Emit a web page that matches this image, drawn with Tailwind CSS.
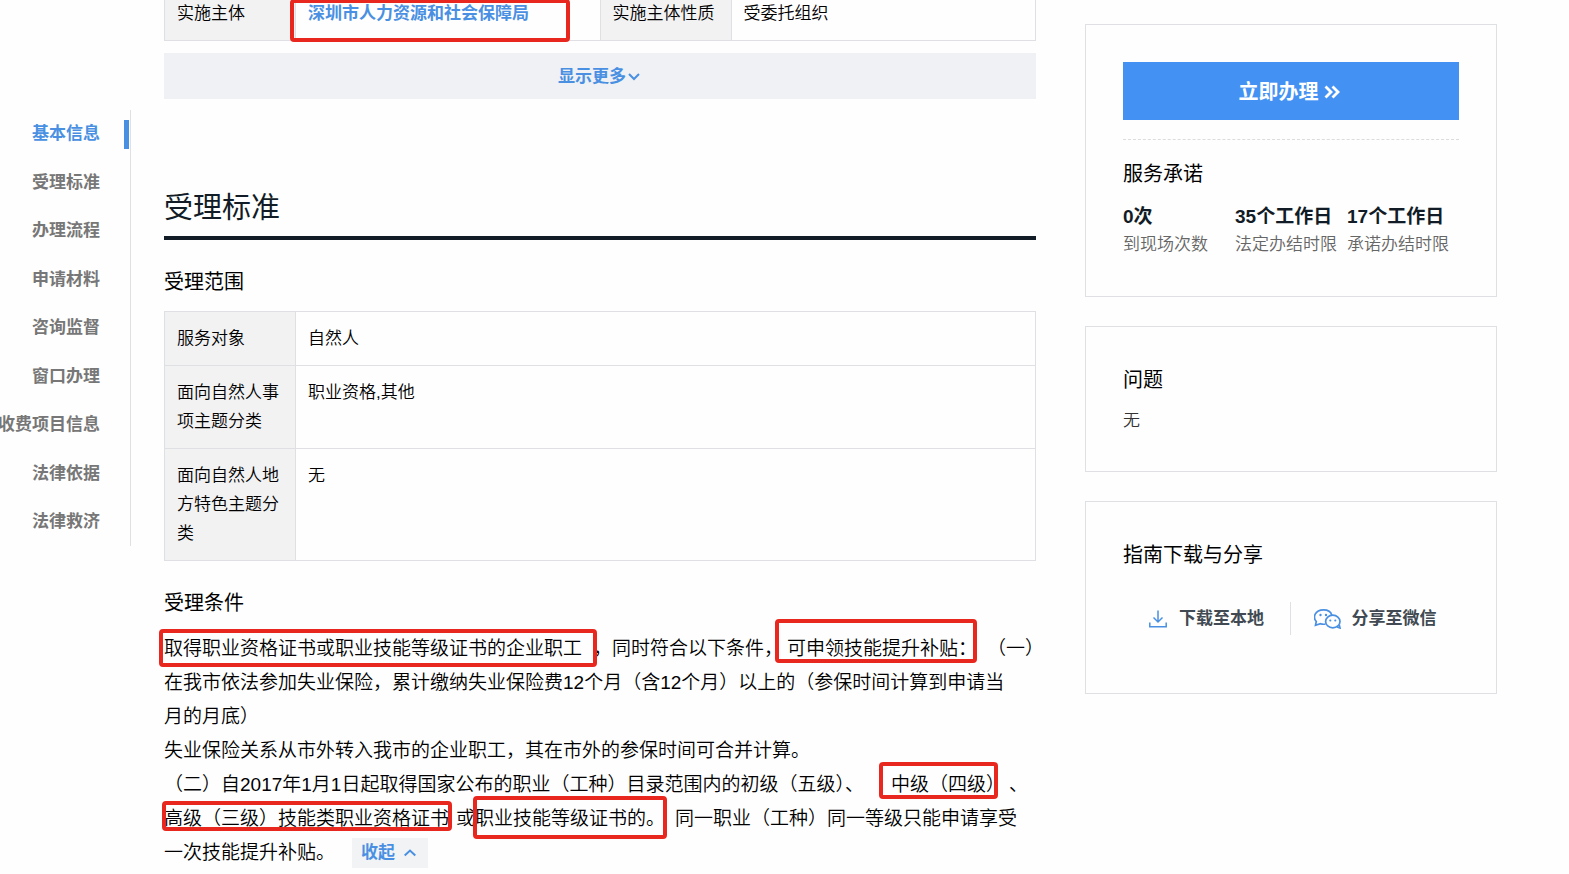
<!DOCTYPE html>
<html lang="zh-CN">
<head>
<meta charset="utf-8">
<meta name="viewport" content="width=device-width, initial-scale=1">
<title>受理标准</title>
<script src="https://cdn.jsdelivr.net/npm/@tailwindcss/browser@4"></script>
</head>
<body class="bg-[#fefefe] font-['Liberation_Sans','Noto_Sans_CJK_SC',sans-serif] text-[17px] text-black overflow-x-hidden">
<div class="flex items-start">

  <nav aria-label="页面目录" class="w-[131px] shrink-0 mt-[110px]">
    <ul class="flex flex-col h-[436px] border-r border-[#dfe0e3] font-bold text-[#777777] whitespace-nowrap">
      <li class="relative flex-1 flex items-center justify-end pr-[30px] text-[#4a90e2]"><a href="#basic">基本信息</a><span class="absolute right-px w-[5px] h-[29px] bg-[#4a90e2]"></span></li>
      <li class="flex-1 flex items-center justify-end pr-[30px]"><a href="#standard">受理标准</a></li>
      <li class="flex-1 flex items-center justify-end pr-[30px]"><a href="#process">办理流程</a></li>
      <li class="flex-1 flex items-center justify-end pr-[30px]"><a href="#materials">申请材料</a></li>
      <li class="flex-1 flex items-center justify-end pr-[30px]"><a href="#consult">咨询监督</a></li>
      <li class="flex-1 flex items-center justify-end pr-[30px]"><a href="#window">窗口办理</a></li>
      <li class="flex-1 flex items-center justify-end pr-[30px]"><a href="#fees">收费项目信息</a></li>
      <li class="flex-1 flex items-center justify-end pr-[30px]"><a href="#law">法律依据</a></li>
      <li class="flex-1 flex items-center justify-end pr-[30px]"><a href="#remedy">法律救济</a></li>
    </ul>
  </nav>

  <main class="flex-1 min-w-0 ml-[33px] mr-[49px]">
    <table id="basic" class="-mt-[14px] w-full table-fixed border-collapse text-left leading-[29px]">
      <tbody>
        <tr>
          <th scope="row" class="w-[131px] border border-[#dfe0e3] bg-[#f2f2f3] p-3 font-[350]">实施主体</th>
          <td class="border border-[#dfe0e3] p-3 font-bold text-[#4a90e2]"><span class="relative inline-block before:absolute before:-left-[18px] before:-right-[41px] before:top-0 before:-bottom-[14px] before:rounded-sm before:border-4 before:border-[#e8281e]"><a href="#agency">深圳市人力资源和社会保障局</a></span></td>
          <th scope="row" class="w-[131px] border border-[#dfe0e3] bg-[#f2f2f3] p-3 font-[350]">实施主体性质</th>
          <td class="border border-[#dfe0e3] p-3 font-[350]">受委托组织</td>
        </tr>
      </tbody>
    </table>
    <button type="button" class="mt-3 flex h-[46px] w-full items-center justify-center gap-[2px] bg-[#f0f1f4] pt-px pr-[2px] font-bold text-[#4a90e2]">显示更多
      <svg class="w-3 h-3" viewBox="0 0 12 12" fill="none" stroke="currentColor" stroke-width="2"><path d="M1 3 6 8l5-5"/></svg>
    </button>

    <h2 id="standard" class="mt-[87px] border-b-4 border-[#111c26] pb-[6px] text-[29px] leading-[44px] text-[#111c26]">受理标准</h2>

    <h3 class="mt-[27px] text-[20px] leading-[30px]">受理范围</h3>
    <table class="mt-[14px] w-full table-fixed border-collapse text-left align-top leading-[29px] font-[350]">
      <tbody>
        <tr>
          <th scope="row" class="w-[131px] border border-[#dfe0e3] bg-[#f2f2f3] p-3 align-top font-[350]">服务对象</th>
          <td class="border border-[#dfe0e3] p-3 align-top">自然人</td>
        </tr>
        <tr>
          <th scope="row" class="border border-[#dfe0e3] bg-[#f2f2f3] p-3 align-top font-[350]">面向自然人事项主题分类</th>
          <td class="border border-[#dfe0e3] p-3 align-top">职业资格,其他</td>
        </tr>
        <tr>
          <th scope="row" class="border border-[#dfe0e3] bg-[#f2f2f3] p-3 align-top font-[350]">面向自然人地方特色主题分类</th>
          <td class="border border-[#dfe0e3] p-3 align-top">无</td>
        </tr>
      </tbody>
    </table>

    <h3 class="mt-[27px] text-[20px] leading-[30px]">受理条件</h3>
    <div class="mt-[14px] text-[19px] leading-[34px] font-[350] whitespace-nowrap">
      <p><span class="relative mr-[11px] inline-block before:absolute before:-left-[5px] before:-right-[15px] before:-top-[3px] before:-bottom-px before:rounded-sm before:border-4 before:border-[#e8281e]">取得职业资格证书或职业技能等级证书的企业职工</span>，同时符合以下条件，<span class="relative ml-1 mr-[10px] inline-block before:absolute before:-left-[12px] before:right-0 before:-top-[13px] before:bottom-[3px] before:rounded-sm before:border-4 before:border-[#e8281e]">可申领技能提升补贴：</span>（一）<br>在我市依法参加失业保险，累计缴纳失业保险费12个月（含12个月）以上的（参保时间计算到申请当<br>月的月底）</p>
      <p>失业保险关系从市外转入我市的企业职工，其在市外的参保时间可合并计算。</p>
      <p>（二）自2017年1月1日起取得国家公布的职业（工种）目录范围内的初级（五级）、<span class="relative ml-[27px] inline-block before:absolute before:-left-[12px] before:right-[7px] before:-top-[6px] before:bottom-[3px] before:rounded-sm before:border-4 before:border-[#e8281e]">中级（四级）</span><span class="ml-1">、</span><br><span class="relative mr-[7px] inline-block before:absolute before:-left-[2px] before:-right-[3px] before:-top-px before:bottom-[5px] before:rounded-sm before:border-4 before:border-[#e8281e]">高级（三级）技能类职业资格证书</span>或<span class="relative mr-[10px] inline-block before:absolute before:-left-[2px] before:-right-[2px] before:-top-[6px] before:-bottom-[3px] before:rounded-sm before:border-4 before:border-[#e8281e]">职业技能等级证书的。</span>同一职业（工种）同一等级只能申请享受</p>
      <div class="flex items-center">一次技能提升补贴。
        <button type="button" class="ml-[17px] flex h-[30px] items-center gap-[9px] bg-[#f2f3f5] pl-[9px] pr-3 text-[17px] font-bold text-[#4a90e2]">收起
          <svg class="w-3 h-3" viewBox="0 0 12 12" fill="none" stroke="currentColor" stroke-width="2"><path d="M.7 8.500 6 3.500l5.300 5"/></svg>
        </button>
      </div>
    </div>
  </main>

  <aside class="w-[412px] shrink-0 mr-[72px] mt-6 flex flex-col gap-[29px]">
    <section class="border border-[#dfe0e3] p-[37px]">
      <button type="button" class="flex h-[58px] w-full items-center justify-center gap-[5px] bg-[#4391f2] pt-px pr-1 text-[20px] font-bold text-white">立即办理
        <svg class="h-4 w-4" viewBox="0 0 16 16" fill="none" stroke="currentColor" stroke-width="2.800"><path d="M1.500 2.500 7 8l-5.500 5.500M8.500 2.500 14 8l-5.500 5.500"/></svg>
      </button>
      <div class="mt-[19px] border-t border-dashed border-[#dcdcdc] pt-[19px]">
        <h3 class="text-[20px] leading-[30px]">服务承诺</h3>
        <dl class="mt-[14px] grid grid-cols-3 leading-7 whitespace-nowrap">
          <div class="flex flex-col-reverse"><dt class="font-[350] text-[#666666]">到现场次数</dt><dd class="text-[19px] font-bold text-[#111c26]">0次</dd></div>
          <div class="flex flex-col-reverse"><dt class="font-[350] text-[#666666]">法定办结时限</dt><dd class="text-[19px] font-bold text-[#111c26]">35个工作日</dd></div>
          <div class="flex flex-col-reverse"><dt class="font-[350] text-[#666666]">承诺办结时限</dt><dd class="text-[19px] font-bold text-[#111c26]">17个工作日</dd></div>
        </dl>
      </div>
    </section>

    <section class="border border-[#dfe0e3] px-[37px] pt-[38px] pb-9">
      <h3 class="text-[20px] leading-[30px]">问题</h3>
      <p class="mt-3 leading-7 font-[350] text-[#333333]">无</p>
    </section>

    <section class="border border-[#dfe0e3] px-[37px] pt-[38px] pb-[58px]">
      <h3 class="text-[20px] leading-[30px]">指南下载与分享</h3>
      <div class="mt-8 grid h-[33px] grid-cols-2 divide-x divide-[#dfe0e3] font-bold text-[#414a52]">
        <button type="button" class="flex items-center justify-center gap-3">
          <svg class="h-[18px] w-[18px] text-[#4a90e2]" viewBox="0 0 18 18" fill="none" stroke="currentColor" stroke-width="1.500"><path d="M9 .5v11.500M4.500 7.500 9 12l4.500-4.500M.8 12.500v4.300h16.400v-4.300"/></svg>
          下载至本地
        </button>
        <button type="button" class="flex items-center justify-center gap-[11px]">
          <svg class="h-5 w-[27px] text-[#4a90e2]" viewBox="0 0 27 20" fill="none" stroke="currentColor" stroke-width="1.700"><path d="M11.500 15c-1.700.4-3.400.3-5-.3L1.500 16.300l.8-3.800C-1.500 8.500.8 1 9.500.9c4.500 0 7.500 2.200 8.300 5.200"/><ellipse cx="18.800" cy="12.500" rx="7.200" ry="6.300"/><path d="m23 18 3 1-.8-3.200"/><g fill="currentColor" stroke="none"><circle cx="6.500" cy="6" r="1.200"/><circle cx="12" cy="6" r="1.200"/><circle cx="16.300" cy="11.500" r="1.100"/><circle cx="21.300" cy="11.500" r="1.100"/></g></svg>
          分享至微信
        </button>
      </div>
    </section>
  </aside>
</div>
</body>
</html>
